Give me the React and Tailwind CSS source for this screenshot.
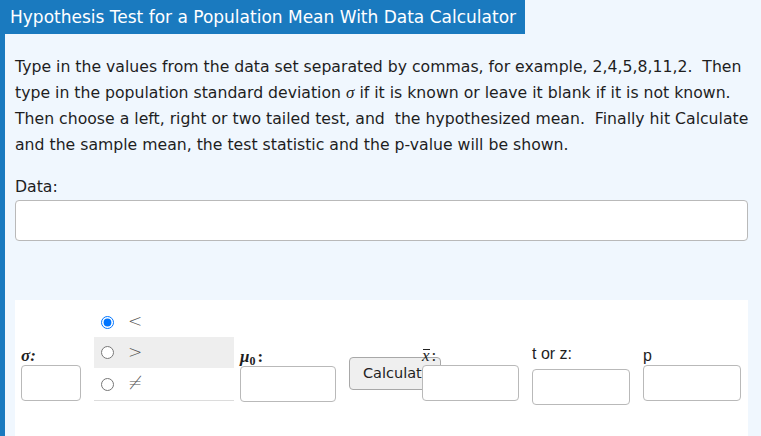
export default function App() {
  const box = "block h-[36px] rounded-[4px] border border-[#b9b9b9] bg-white";
  const math = "font-['Liberation_Serif',serif] font-bold italic";

  return (
    <div className="min-h-[436px] bg-[#f0f7fe] font-['DejaVu_Sans',Verdana,sans-serif] text-[#1e1e1e]">
      <div className="w-[525px] h-[34px] bg-[#1a7abf] pl-[10px] text-[17px] leading-[34px] text-white whitespace-nowrap">
        Hypothesis Test for a Population Mean With Data Calculator
      </div>

      <div className="border-l-[5px] border-[#1a7abf] pl-[10px] pr-[13px] min-h-[402px] flex flex-col">
        <p className="mt-[20px] text-[15.7px] leading-[26px] whitespace-nowrap">
          Type in the values from the data set separated by commas, for example, 2,4,5,8,11,2.&nbsp; Then
          <br />
          type in the population standard deviation{" "}
          <span className="font-['Liberation_Serif',serif] italic text-[17px]">σ</span> if it is known or leave it
          blank if it is not known.
          <br />
          Then choose a left, right or two tailed test, and&nbsp; the hypothesized mean.&nbsp; Finally hit Calculate
          <br />
          and the sample mean, the test statistic and the p-value will be shown.
        </p>

        <div className="mt-[16px] text-[15.7px] leading-[26px]">Data:</div>
        <input className="block w-full h-[41px] rounded-[4px] border border-[#b9b9b9] bg-white" />

        <div className="mt-[59px] flex-1 bg-white flex items-start pt-[7px]">
          {/* sigma */}
          <div className="ml-[6px] mt-[39px] w-[60px]">
            <div className={`${math} text-[17px] leading-[19px]`}>σ:</div>
            <input className={`${box} w-[60px]`} />
          </div>

          {/* test type */}
          <div className="ml-[13px] w-[140px] border-b border-[#dcdcdc] text-[#555]">
            <label className="flex items-center h-[30px] pl-[7px]">
              <input type="radio" name="tail" defaultChecked className="m-0 w-[13px] h-[13px]" />
              <span className="ml-[14px] text-[17px] font-light">&lt;</span>
            </label>
            <label className="flex items-center h-[31px] pl-[7px] bg-[#eeeeee]">
              <input type="radio" name="tail" className="m-0 w-[13px] h-[13px]" />
              <span className="ml-[14px] text-[17px] font-light">&gt;</span>
            </label>
            <label className="flex items-center h-[32px] pl-[7px]">
              <input type="radio" name="tail" className="m-0 w-[13px] h-[13px]" />
              <span className="ml-[14px] text-[17px] font-light">≠</span>
            </label>
          </div>

          {/* mu0 */}
          <div className="ml-[6px] mt-[40px] w-[96px]">
            <div className={`${math} text-[17px] leading-[19px]`}>
              μ<sub className="text-[12px] not-italic">0</sub>
              <span className="ml-[2px] not-italic">:</span>
            </div>
            <input className={`${box} w-[96px]`} />
          </div>

          <button className="ml-[13px] mt-[50px] w-[92px] h-[33px] rounded-[4px] border border-[#a8a8a8] bg-[#efefef] pl-[13px] text-left text-[14.5px] text-[#222] overflow-hidden whitespace-nowrap">
            Calculate
          </button>

          {/* xbar */}
          <div className="relative ml-[-19px] mt-[39px] w-[97px]">
            <div className="font-['Liberation_Serif',serif] italic text-[17px] leading-[19px] text-[#222]">
              <span className="relative inline-block">
                x
                <span className="absolute left-[1px] right-0 top-[3px] h-px bg-[#222]" />
              </span>
              <span className="not-italic ml-[2px]">:</span>
            </div>
            <input className={`${box} w-[97px]`} />
          </div>

          <div className="ml-[13px] mt-[37px] w-[98px] font-['Liberation_Sans',Arial,sans-serif]">
            <div className="text-[16px] leading-[19px] h-[25px]">t or z:</div>
            <input className={`${box} w-[98px]`} />
          </div>

          <div className="ml-[13px] mt-[39px] w-[98px] font-['Liberation_Sans',Arial,sans-serif]">
            <div className="text-[16px] leading-[19px]">p</div>
            <input className={`${box} w-[98px]`} />
          </div>
        </div>
      </div>
    </div>
  );
}
